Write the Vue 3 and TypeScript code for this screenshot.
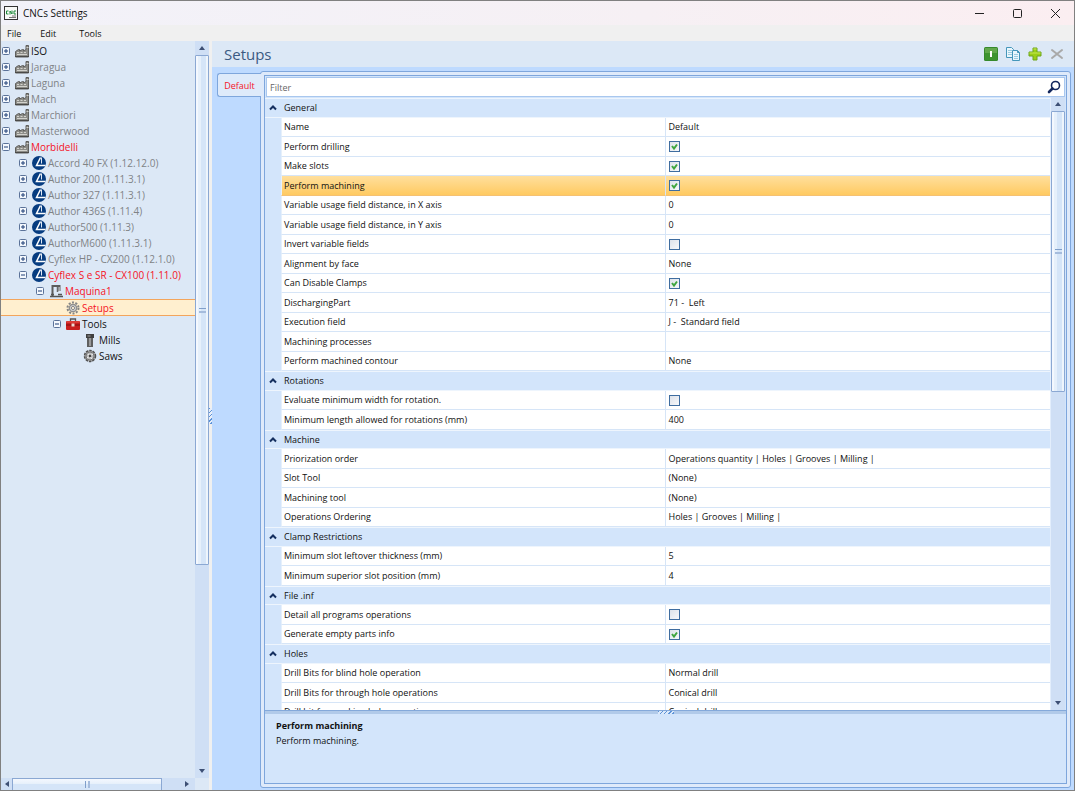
<script setup lang="ts">
import { ref } from 'vue'

type TreeIcon = 'factory' | 'brand' | 'machine' | 'gear' | 'toolbox' | 'mill' | 'saw'

interface TreeNode {
  label: string
  level: number
  icon: TreeIcon
  tone: 'muted' | 'alert' | 'plain'
  toggle?: 'plus' | 'minus'
}

interface GridRow {
  id: string
  name: string
  group?: boolean
  value?: string
  checked?: boolean
}

const brandNode = (label: string): TreeNode => ({ label, level: 1, icon: 'brand', tone: 'muted', toggle: 'plus' })
const factoryNode = (label: string): TreeNode => ({ label, level: 0, icon: 'factory', tone: 'muted', toggle: 'plus' })

const nodes: TreeNode[] = [
  { label: 'ISO', level: 0, icon: 'factory', tone: 'plain', toggle: 'plus' },
  factoryNode('Jaragua'),
  factoryNode('Laguna'),
  factoryNode('Mach'),
  factoryNode('Marchiori'),
  factoryNode('Masterwood'),
  { label: 'Morbidelli', level: 0, icon: 'factory', tone: 'alert', toggle: 'minus' },
  brandNode('Accord 40 FX (1.12.12.0)'),
  brandNode('Author 200 (1.11.3.1)'),
  brandNode('Author 327 (1.11.3.1)'),
  brandNode('Author 436S (1.11.4)'),
  brandNode('Author500 (1.11.3)'),
  brandNode('AuthorM600 (1.11.3.1)'),
  brandNode('Cyflex HP - CX200 (1.12.1.0)'),
  { label: 'Cyflex S e SR - CX100 (1.11.0)', level: 1, icon: 'brand', tone: 'alert', toggle: 'minus' },
  { label: 'Maquina1', level: 2, icon: 'machine', tone: 'alert', toggle: 'minus' },
  { label: 'Setups', level: 3, icon: 'gear', tone: 'alert' },
  { label: 'Tools', level: 3, icon: 'toolbox', tone: 'plain', toggle: 'minus' },
  { label: 'Mills', level: 4, icon: 'mill', tone: 'plain' },
  { label: 'Saws', level: 4, icon: 'saw', tone: 'plain' },
]

const group = (name: string): GridRow => ({ id: 'g-' + name, name, group: true })
const text = (name: string, value: string): GridRow => ({ id: name, name, value })
const check = (name: string, checked: boolean): GridRow => ({ id: name, name, checked })

const rows = ref<GridRow[]>([
  group('General'),
  text('Name', 'Default'),
  check('Perform drilling', true),
  check('Make slots', true),
  check('Perform machining', true),
  text('Variable usage field distance, in X axis', '0'),
  text('Variable usage field distance, in Y axis', '0'),
  check('Invert variable fields', false),
  text('Alignment by face', 'None'),
  check('Can Disable Clamps', true),
  text('DischargingPart', '71 -  Left'),
  text('Execution field', 'J -  Standard field'),
  text('Machining processes', ''),
  text('Perform machined contour', 'None'),
  group('Rotations'),
  check('Evaluate minimum width for rotation.', false),
  text('Minimum length allowed for rotations (mm)', '400'),
  group('Machine'),
  text('Priorization order', 'Operations quantity | Holes | Grooves | Milling |'),
  text('Slot Tool', '(None)'),
  text('Machining tool', '(None)'),
  text('Operations Ordering', 'Holes | Grooves | Milling |'),
  group('Clamp Restrictions'),
  text('Minimum slot leftover thickness (mm)', '5'),
  text('Minimum superior slot position (mm)', '4'),
  group('File .inf'),
  check('Detail all programs operations', false),
  check('Generate empty parts info', true),
  group('Holes'),
  text('Drill Bits for blind hole operation', 'Normal drill'),
  text('Drill Bits for through hole operations', 'Conical drill'),
  text('Drill bit for marking hole operation', 'Conical drill'),
])

const selectedNode = ref('Setups')
const selectedRow = ref('Perform machining')
const filter = ref('')
</script>

<template>
  <div class="window">
    <header class="titlebar">
      <svg class="app-icon" viewBox="0 0 14 14" aria-hidden="true">
        <rect x=".5" y=".5" width="13" height="13" fill="#f8f9f7" stroke="#333" />
        <path d="M4.500 5H2.500v3h2M6 8.500V5l2 3V4.500M12 5H10v3h2" fill="none" stroke="#1d8a3a" />
        <path d="M5 11.500h7M8 10h4" stroke="#777" stroke-width="1" />
      </svg>
      <span class="app-title">CNCs Settings</span>
      <button type="button" class="win-btn" aria-label="Minimize">
        <svg viewBox="0 0 12 12"><path d="M2 6.500h9" /></svg>
      </button>
      <button type="button" class="win-btn" aria-label="Maximize">
        <svg viewBox="0 0 12 12"><rect x="2.500" y="2.500" width="8" height="8" rx="1" /></svg>
      </button>
      <button type="button" class="win-btn" aria-label="Close">
        <svg viewBox="0 0 12 12"><path d="M2 2l9 9M11 2l-9 9" /></svg>
      </button>
    </header>

    <nav class="menubar">
      <button type="button">File</button>
      <button type="button">Edit</button>
      <button type="button">Tools</button>
    </nav>

    <div class="body">
      <aside class="sidebar">
        <div class="side-main">
          <ul class="tree">
            <li
              v-for="node in nodes"
              :key="node.label"
              :class="['node', 'level-' + node.level, node.tone, { selected: node.label === selectedNode }]"
              @click="selectedNode = node.label"
            >
              <span class="toggle-slot">
                <button v-if="node.toggle" type="button" class="toggle" :aria-label="'Toggle ' + node.label">
                  <svg viewBox="0 0 8 8">
                    <rect x=".5" y=".5" width="7" height="7" rx="1" fill="#f4f8fd" stroke="#5b7299" />
                    <path :d="node.toggle === 'plus' ? 'M2 4h4M4 2v4' : 'M2 4h4'" stroke="#1f3f77" />
                  </svg>
                </button>
              </span>
              <svg v-if="node.icon === 'factory'" class="icon" viewBox="0 0 16 14" aria-hidden="true">
                <path d="M1.500 13V7.500l3-2h1v1.500l3-1.500h1v1.500l2.500-1.500V1.500h2.500V13z" fill="#8d8d88" stroke="#5f5f5c" />
                <path d="M3 8.500h2M6.500 8.500h2M10 8.500h2M3 10.500h10" stroke="#d2d2cd" />
                <path d="M1 12.500h14" stroke="#4a4a48" />
                <path d="M12.500 3.500h2" stroke="#d2d2cd" />
              </svg>
              <svg v-else-if="node.icon === 'brand'" class="icon brand" viewBox="0 0 14 14" aria-hidden="true">
                <circle cx="7" cy="7" r="7" fill="#063c80" />
                <path d="M8.500 1.500L4.500 9.500h9" fill="none" stroke="#fff" stroke-width="1.500" />
                <path d="M9.500 1.500v6" stroke="#e1eaf5" />
              </svg>
              <svg v-else-if="node.icon === 'machine'" class="icon" viewBox="0 0 16 14" aria-hidden="true">
                <path d="M4.500 12V2h7v5" fill="none" stroke="#5c5c5c" stroke-width="2" />
                <path d="M9.500 3v5" stroke="#6a6a6a" stroke-width="1.500" />
                <path d="M2 12.500h13M3 10.500h3M10 10.500h4" stroke="#555" stroke-width="1.400" />
                <path d="M11.500 3v4" stroke="#aaa" />
              </svg>
              <svg v-else-if="node.icon === 'gear'" class="icon" viewBox="0 0 16 14" aria-hidden="true">
                <circle cx="8" cy="7" r="5.500" fill="none" stroke="#858585" stroke-width="2" stroke-dasharray="2 1.460" />
                <circle cx="8" cy="7" r="3.600" fill="#ddd" stroke="#909090" stroke-width="1.500" />
                <circle cx="8" cy="7" r="1.600" fill="#fff4dc" stroke="#888" />
              </svg>
              <svg v-else-if="node.icon === 'toolbox'" class="icon" viewBox="0 0 16 14" aria-hidden="true">
                <path d="M5.500 4V2h5v2" fill="none" stroke="#555" stroke-width="1.300" />
                <rect x="1" y="4" width="14" height="9" rx="1" fill="#c91e1e" />
                <path d="M1.500 5h13" stroke="#ee5a50" />
                <path d="M1 8h14" stroke="#7c1010" />
                <rect x="6.500" y="6.500" width="3" height="3" fill="#f0d7d0" />
              </svg>
              <svg v-else-if="node.icon === 'mill'" class="icon" viewBox="0 0 16 14" aria-hidden="true">
                <rect x="4" y="1" width="8" height="4" fill="#3f3f3f" />
                <rect x="5" y="5" width="6" height="9" fill="#5f5f5f" />
                <path d="M8 5v8" stroke="#9a9a9a" stroke-width="2" />
                <path d="M5.500 3h3" stroke="#808080" stroke-width="1.500" />
              </svg>
              <svg v-else class="icon" viewBox="0 0 16 14" aria-hidden="true">
                <circle cx="8" cy="7" r="5.500" fill="#aaa" stroke="#505050" stroke-width="1.500" stroke-dasharray="2.500 1" />
                <circle cx="8" cy="7" r="4" fill="#bdbdbd" stroke="#777" />
                <path d="M5 9l6-4M6 5l4 5" stroke="#eee" />
                <circle cx="8" cy="7" r="1.300" fill="#444" />
              </svg>
              <span class="node-label">{{ node.label }}</span>
            </li>
          </ul>
          <div class="vscroll">
            <button type="button" class="arrow" aria-label="Scroll up"><svg viewBox="0 0 8 8"><path d="M1 6l3-4 3 4z" /></svg></button>
            <div class="track">
              <div class="thumb side-thumb"><i class="grip"></i></div>
            </div>
            <button type="button" class="arrow" aria-label="Scroll down"><svg viewBox="0 0 8 8"><path d="M1 2l3 4 3-4z" /></svg></button>
          </div>
        </div>
        <div class="hscroll">
          <button type="button" class="harrow" aria-label="Scroll left"><svg viewBox="0 0 8 8"><path d="M6 1L2 4l4 3z" /></svg></button>
          <div class="htrack"><div class="hthumb"><i class="hgrip"></i></div></div>
          <button type="button" class="harrow right" aria-label="Scroll right"><svg viewBox="0 0 8 8"><path d="M2 1l4 3-4 3z" /></svg></button>
          <span class="corner"></span>
        </div>
      </aside>

      <div class="divider"><i></i></div>

      <main class="content">
        <div class="heading">
          <h1>Setups</h1>
          <button type="button" class="tool" aria-label="Enable">
            <svg viewBox="0 0 16 16">
              <rect x="1" y="1" width="14" height="14" rx="1.500" fill="#36892c" />
              <path d="M2 2h12v5H2z" fill="#62a84c" />
              <rect x="2" y="7" width="12" height="7" fill="#3e9430" />
              <rect x="7" y="5" width="2" height="6" fill="#fff" />
            </svg>
          </button>
          <button type="button" class="tool" aria-label="Copy">
            <svg viewBox="0 0 16 16" stroke="#4596ba">
              <path d="M1.500 1.500h5l2 2v8h-7z" fill="#e9f6fc" />
              <path d="M3 4.500h4M3 6.500h4M3 8.500h4" stroke="#9bcbe0" />
              <path d="M7.500 4.500h5l2 2v8h-7z" fill="#e9f6fc" />
              <path d="M12.500 4.500v2h2" fill="#4596ba" />
              <path d="M9 8.500h4M9 10.500h4M9 12.500h4" stroke="#9bcbe0" />
            </svg>
          </button>
          <button type="button" class="tool" aria-label="Add">
            <svg viewBox="0 0 16 16">
              <path d="M6 2h4v4h4v4h-4v4H6v-4H2V6h4z" fill="#9bce18" stroke="#6ca51c" stroke-linejoin="round" />
              <path d="M6.500 3h3M2.500 7h11" stroke="#c5e757" />
            </svg>
          </button>
          <button type="button" class="tool" aria-label="Delete">
            <svg viewBox="0 0 16 16"><path d="M3 4l10 8M13 4L3 12" stroke="#a9a9a9" stroke-width="2" stroke-linecap="round" /></svg>
          </button>
        </div>

        <div class="workspace">
          <div class="tabs"><button type="button" class="tab">Default</button></div>
          <section class="panel">
            <div class="panel-inner">
              <div class="filter">
                <input v-model="filter" type="text" placeholder="Filter" aria-label="Filter" />
                <button type="button" aria-label="Search">
                  <svg viewBox="0 0 14 14"><circle cx="8.500" cy="5.500" r="4" fill="none" stroke="#14285e" stroke-width="1.600" /><path d="M5.500 8.500L2 12" stroke="#14285e" stroke-width="2.600" stroke-linecap="round" /></svg>
                </button>
              </div>
              <div class="grid-area">
                <div class="grid-view">
                  <table class="grid">
                    <colgroup><col class="col-gutter" /><col /><col /></colgroup>
                    <tbody>
                      <tr
                        v-for="row in rows"
                        :key="row.id"
                        :class="{ group: row.group, active: row.id === selectedRow }"
                        @click="!row.group && (selectedRow = row.id)"
                      >
                        <th v-if="row.group" colspan="3" scope="rowgroup">
                          <button type="button" class="group-btn">
                            <svg viewBox="0 0 8 6" aria-hidden="true"><path d="M1 4.500l3-3 3 3" /></svg>{{ row.name }}
                          </button>
                        </th>
                        <template v-else>
                          <td class="gutter"></td>
                          <th scope="row" class="name">
                            <label v-if="row.checked !== undefined" :for="row.id">{{ row.name }}</label>
                            <template v-else>{{ row.name }}</template>
                          </th>
                          <td class="value">
                            <input v-if="row.checked !== undefined" :id="row.id" v-model="row.checked" type="checkbox" />
                            <template v-else>{{ row.value }}</template>
                          </td>
                        </template>
                      </tr>
                    </tbody>
                  </table>
                </div>
                <div class="vscroll">
                  <button type="button" class="arrow" aria-label="Scroll up"><svg viewBox="0 0 8 8"><path d="M1 6l3-4 3 4z" /></svg></button>
                  <div class="track">
                    <div class="thumb grid-thumb"><i class="grip"></i></div>
                  </div>
                  <button type="button" class="arrow" aria-label="Scroll down"><svg viewBox="0 0 8 8"><path d="M1 2l3 4 3-4z" /></svg></button>
                </div>
              </div>
              <div class="splitter"><i></i></div>
              <div class="description">
                <h2>{{ selectedRow }}</h2>
                <p>{{ selectedRow }}.</p>
              </div>
            </div>
          </section>
        </div>
      </main>
    </div>
  </div>
</template>

<style>
body {
  margin: 0;
  background: #fff;
}
</style>

<style scoped>
* {
  box-sizing: border-box;
}
button {
  margin: 0;
  padding: 0;
  border: 0;
  background: none;
  font: inherit;
  color: inherit;
}
svg {
  display: block;
}
.window {
  display: flex;
  flex-direction: column;
  height: calc(100vh - 2px);
  border: 1px solid #808080;
  background: #f0f0f0;
  font-family: 'Open Sans', 'Noto Sans', sans-serif;
  font-size: 9px;
  color: #111;
  overflow: hidden;
}
.titlebar {
  display: flex;
  align-items: center;
  height: 24px;
  flex: none;
  padding-left: 3px;
  background: linear-gradient(90deg, #f2f2f9, #f6f0f4 60%, #fbeef1);
}
.app-icon {
  width: 14px;
  height: 14px;
}
.app-title {
  flex: 1;
  margin-left: 5px;
  font-size: 10px;
  line-height: 14px;
}
.win-btn {
  display: flex;
  align-items: center;
  justify-content: center;
  width: 38px;
  height: 22px;
}
.win-btn svg {
  width: 12px;
  height: 12px;
  fill: none;
  stroke: #222;
}
.menubar {
  display: flex;
  align-items: center;
  gap: 19px;
  height: 16px;
  flex: none;
  padding-left: 6px;
}
.menubar button + button + button {
  margin-left: 4px;
}
.body {
  display: flex;
  flex: 1;
  min-height: 0;
}
.sidebar {
  display: flex;
  flex-direction: column;
  width: 208px;
  flex: none;
  background: #dce8f6;
}
.side-main {
  display: flex;
  flex: 1;
  min-height: 0;
}
.tree {
  flex: 1;
  min-width: 0;
  margin: 0;
  padding: 2px 0 0;
  list-style: none;
  overflow: hidden;
  font-size: 10px;
}
.node {
  display: flex;
  align-items: center;
  height: 16px;
  line-height: 16px;
  white-space: nowrap;
}
.level-1 {
  padding-left: 17px;
}
.level-2 {
  padding-left: 34px;
}
.level-3 {
  padding-left: 51px;
}
.level-4 {
  padding-left: 68px;
}
.muted {
  color: #808386;
}
.alert {
  color: #f5131f;
}
.selected {
  height: 17px;
  border-top: 1px solid #f3a55c;
  border-bottom: 1px solid #f3a55c;
  background: #ffefcf;
}
.toggle-slot {
  width: 13px;
  flex: none;
  padding-left: 1px;
}
.toggle {
  display: block;
  width: 8px;
  height: 8px;
}
.icon {
  width: 16px;
  height: 14px;
  flex: none;
}
.icon.brand {
  width: 14px;
  margin: 0 1px;
}
.node-label {
  margin-left: 1px;
}
.vscroll {
  display: flex;
  flex-direction: column;
  width: 14px;
  flex: none;
  background: #cfdff5;
}
.arrow {
  display: flex;
  align-items: center;
  justify-content: center;
  height: 14px;
  flex: none;
}
.arrow svg,
.harrow svg {
  width: 8px;
  height: 8px;
  fill: #3d4f74;
}
.track {
  flex: 1;
  min-height: 0;
}
.thumb {
  display: flex;
  align-items: center;
  justify-content: center;
  border: 1px solid #8ba8d3;
  border-radius: 1px;
  background: linear-gradient(90deg, #f4f8fe 0 15%, #e6f0fb 15% 45%, #d5e5f8 45% 85%, #eef5fc 85%);
}
.side-thumb {
  height: 72%;
}
.grid-thumb {
  height: 48%;
}
.grip {
  width: 7px;
  height: 5px;
  border-top: 1px solid #809fca;
  border-bottom: 2px solid #a5bcdd;
}
.hscroll {
  display: flex;
  height: 12px;
  flex: none;
  background: #cfdff5;
}
.harrow {
  display: flex;
  align-items: center;
  justify-content: center;
  width: 11px;
  flex: none;
}
.harrow.right {
  width: 16px;
}
.htrack {
  flex: 1;
}
.hthumb {
  display: flex;
  align-items: center;
  justify-content: center;
  width: 90%;
  height: 100%;
  border: 1px solid #8ba8d3;
  border-bottom: 0;
  background: linear-gradient(#f4f8fe, #e6f0fb 45%, #d5e5f8 45%);
}
.hgrip {
  width: 5px;
  height: 7px;
  border-left: 1px solid #809fca;
  border-right: 2px solid #a5bcdd;
}
.corner {
  width: 14px;
  background: #dce8f6;
}
.divider {
  display: flex;
  align-items: center;
  width: 3px;
  flex: none;
  background: #f0f0f0;
}
.divider i {
  width: 3px;
  height: 16px;
  background: repeating-linear-gradient(135deg, #5c93d8 0 1px, #e8eef8 1px 3px);
}
.content {
  display: flex;
  flex: 1;
  flex-direction: column;
  min-width: 0;
  background: #bedaff;
}
.heading {
  display: flex;
  align-items: center;
  gap: 6px;
  height: 26px;
  flex: none;
  padding: 0 9px 0 12px;
  background: #dce8f6;
}
.heading h1 {
  flex: 1;
  margin: 0;
  font-size: 15px;
  font-weight: 400;
  line-height: 20px;
  color: #3b5a82;
}
.tool,
.tool svg {
  width: 16px;
  height: 16px;
  fill: none;
}
.workspace {
  display: flex;
  flex: 1;
  min-height: 0;
  padding: 4px 3px 2px 5px;
}
.tabs {
  padding-top: 2px;
}
.tab {
  position: relative;
  z-index: 1;
  width: 44px;
  height: 24px;
  margin-right: -1px;
  border: 1px solid #7ea6dc;
  border-right: 0;
  border-radius: 3px 0 0 3px;
  background: #deeafa;
  color: #f5131f;
}
.panel {
  display: flex;
  flex: 1;
  min-width: 0;
  padding: 3px;
  border: 1px solid #7ea6dc;
  border-radius: 3px;
  background: #dfeafa;
}
.panel-inner {
  display: flex;
  flex: 1;
  flex-direction: column;
  min-width: 0;
  border: 1px solid #7ea6dc;
  background: #d3e5fb;
}
.filter {
  display: flex;
  align-items: center;
  height: 20px;
  flex: none;
  margin: 1px 1px 0;
  border: 1px solid #a9c7ee;
  background: #fff;
}
.filter input {
  flex: 1;
  min-width: 0;
  height: 18px;
  padding: 0 3px;
  border: 0;
  outline: 0;
  background: none;
  font: inherit;
  color: #1b1b1b;
}
.filter input::placeholder {
  color: #666;
  opacity: 1;
}
.filter button {
  margin-right: 3px;
}
.filter button svg {
  width: 14px;
  height: 14px;
}
.grid-area {
  display: flex;
  flex: 1;
  min-height: 0;
  padding-right: 1px;
}
.grid-view {
  flex: 1;
  min-width: 0;
  padding-top: 1px;
  overflow: hidden;
}
.grid {
  width: 100%;
  table-layout: fixed;
  border-spacing: 0;
  border-right: 1px solid #e3eefc;
}
.col-gutter {
  width: 16px;
}
.grid tr {
  height: 20px;
}
.grid tr:nth-child(even) {
  height: 19px;
}
.grid th,
.grid td {
  padding: 0;
  line-height: 14px;
  font-weight: 400;
  text-align: left;
  white-space: pre;
  overflow: hidden;
}
.grid .group th {
  border-bottom: 1px solid #eef5fd;
  border-top: 1px solid #eef5fd;
  background: #d3e5fb;
}
.group-btn {
  display: flex;
  align-items: center;
  height: 16px;
  padding-left: 4px;
}
.group-btn svg {
  width: 8px;
  height: 6px;
  margin-right: 7px;
  fill: none;
  stroke: #16305f;
  stroke-width: 2;
}
.grid .gutter {
  background: #d3e5fb;
}
.grid .name,
.grid .value {
  border-bottom: 1px solid #d6e5f7;
  background: #fff;
}
.grid .name {
  padding-left: 2px;
  border-right: 1px solid #d6e5f7;
  border-left: 1px solid #e6f0fb;
}
.grid .value {
  padding-left: 3px;
}
.grid .active .name,
.grid .active .value {
  border-bottom-color: #f5c173;
  background: linear-gradient(#ffdf9d, #ffca61);
}
.value input {
  display: block;
  appearance: none;
  width: 11px;
  height: 11px;
  margin: 0;
  border: 1px solid #3f6da0;
  background: linear-gradient(135deg, #dde2ea, #f7f8fa);
}
.value input:checked {
  background: url("data:image/svg+xml,%3Csvg xmlns='http://www.w3.org/2000/svg' viewBox='0 0 9 9'%3E%3Cpath d='M2 4l2 2.500 3-4' fill='none' stroke='%233fa53f' stroke-width='2'/%3E%3C/svg%3E") center / 9px 9px no-repeat, linear-gradient(135deg, #dde2ea, #f7f8fa);
}
.splitter {
  display: flex;
  justify-content: center;
  height: 4px;
  flex: none;
  border-top: 1px solid #84a9da;
  background: #b1cae9;
}
.splitter i {
  width: 16px;
  height: 3px;
  background: repeating-linear-gradient(135deg, #5c93d8 0 1px, #dbe9fa 1px 3px);
}
.description {
  height: 69px;
  flex: none;
  padding: 4px 11px;
}
.description h2,
.description p {
  margin: 0;
  font-size: 9px;
  line-height: 15px;
}
</style>
